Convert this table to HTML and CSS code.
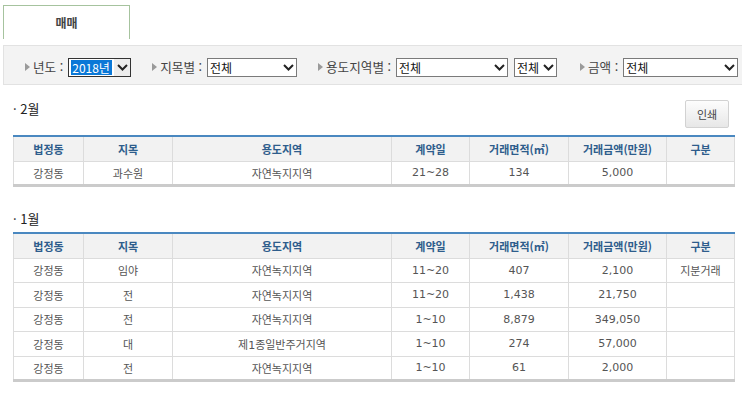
FILE: index.html
```html
<!DOCTYPE html>
<html lang="ko">
<head>
<meta charset="utf-8">
<link rel="stylesheet" href="styles.css">
</head>
<body>
<div class="tabs"><div class="tab">매매</div></div>

<div class="filter">
  <div class="fitem">
    <svg class="tri" width="5" height="8" viewBox="0 0 5 8"><path d="M0 0 L5 4 L0 8 Z" fill="#9a9a9a"/></svg>
    <span class="flabel">년도 :</span>
    <span class="sel focus w62"><span class="hl">2018년</span><span class="chev"><svg width="11" height="7" viewBox="0 0 11 7"><path d="M1 1 L5.5 5.5 L10 1" fill="none" stroke="#222" stroke-width="2"/></svg></span></span>
  </div>
  <div class="fitem">
    <svg class="tri" width="5" height="8" viewBox="0 0 5 8"><path d="M0 0 L5 4 L0 8 Z" fill="#9a9a9a"/></svg>
    <span class="flabel">지목별 :</span>
    <span class="sel w90"><span class="stext">전체</span><span class="chev"><svg width="11" height="7" viewBox="0 0 11 7"><path d="M1 1 L5.5 5.5 L10 1" fill="none" stroke="#222" stroke-width="2"/></svg></span></span>
  </div>
  <div class="fitem">
    <svg class="tri" width="5" height="8" viewBox="0 0 5 8"><path d="M0 0 L5 4 L0 8 Z" fill="#9a9a9a"/></svg>
    <span class="flabel">용도지역별 :</span>
    <span class="sel w111"><span class="stext">전체</span><span class="chev"><svg width="11" height="7" viewBox="0 0 11 7"><path d="M1 1 L5.5 5.5 L10 1" fill="none" stroke="#222" stroke-width="2"/></svg></span></span>
    <span class="sel w42"><span class="stext">전체</span><span class="chev"><svg width="11" height="7" viewBox="0 0 11 7"><path d="M1 1 L5.5 5.5 L10 1" fill="none" stroke="#222" stroke-width="2"/></svg></span></span>
  </div>
  <div class="fitem">
    <svg class="tri" width="5" height="8" viewBox="0 0 5 8"><path d="M0 0 L5 4 L0 8 Z" fill="#9a9a9a"/></svg>
    <span class="flabel">금액 :</span>
    <span class="sel w113"><span class="stext">전체</span><span class="chev"><svg width="11" height="7" viewBox="0 0 11 7"><path d="M1 1 L5.5 5.5 L10 1" fill="none" stroke="#222" stroke-width="2"/></svg></span></span>
  </div>
</div>

<div class="content">
  <div class="shead first">
    <div class="stitle">· 2월</div>
    <button class="print">인쇄</button>
  </div>
  <table class="grid">
    <colgroup><col class="c1"><col class="c2"><col class="c3"><col class="c4"><col class="c5"><col class="c6"><col class="c7"></colgroup>
    <thead><tr><th>법정동</th><th>지목</th><th>용도지역</th><th>계약일</th><th>거래면적(㎡)</th><th>거래금액(만원)</th><th>구분</th></tr></thead>
    <tbody>
      <tr><td>강정동</td><td>과수원</td><td>자연녹지지역</td><td>21~28</td><td>134</td><td>5,000</td><td></td></tr>
    </tbody>
  </table>

  <div class="shead second">
    <div class="stitle">· 1월</div>
  </div>
  <table class="grid">
    <colgroup><col class="c1"><col class="c2"><col class="c3"><col class="c4"><col class="c5"><col class="c6"><col class="c7"></colgroup>
    <thead><tr><th>법정동</th><th>지목</th><th>용도지역</th><th>계약일</th><th>거래면적(㎡)</th><th>거래금액(만원)</th><th>구분</th></tr></thead>
    <tbody>
      <tr><td>강정동</td><td>임야</td><td>자연녹지지역</td><td>11~20</td><td>407</td><td>2,100</td><td>지분거래</td></tr>
      <tr><td>강정동</td><td>전</td><td>자연녹지지역</td><td>11~20</td><td>1,438</td><td>21,750</td><td></td></tr>
      <tr><td>강정동</td><td>전</td><td>자연녹지지역</td><td>1~10</td><td>8,879</td><td>349,050</td><td></td></tr>
      <tr><td>강정동</td><td>대</td><td>제1종일반주거지역</td><td>1~10</td><td>274</td><td>57,000</td><td></td></tr>
      <tr><td>강정동</td><td>전</td><td>자연녹지지역</td><td>1~10</td><td>61</td><td>2,000</td><td></td></tr>
    </tbody>
  </table>
</div>
</body>
</html>
```

FILE: styles.css
```css
* { box-sizing: border-box; }
html, body { margin: 0; padding: 0; background: #fff; }
body {
  font-family: "Noto Sans CJK KR", "Noto Sans", sans-serif;
  color: #333;
  width: 742px;
  overflow: hidden;
}
.tabs { padding: 5px 0 0 3px; height: 39px; }
.tab {
  width: 127px;
  height: 34px;
  border: 1px solid #a6c39e;
  border-bottom: none;
  text-align: center;
  font-size: 12px;
  font-weight: bold;
  color: #444;
  line-height: 34px;
}
.filter {
  margin: 6px 0 0 3px;
  height: 40px;
  background: #f3f3f3;
  border: 1px solid #e2e2e2;
  border-right: none;
  display: flex;
  align-items: center;
  padding: 4px 0 0 21px;
  font-size: 12px;
  color: #444;
}
.fitem { display: flex; align-items: center; margin-right: 21px; }
.fitem:last-child { margin-right: 0; }
.tri { margin-right: 3px; }
.flabel { margin-right: 5px; line-height: 16px; white-space: nowrap; font-size: 12.6px; }
.sel {
  height: 19px;
  border: 1px solid #7a7a7a;
  background: #fff;
  display: flex;
  align-items: center;
  justify-content: space-between;
  color: #111;
  font-size: 12px;
  padding-left: 2px;
  white-space: nowrap;
  flex: none;
}
.sel + .sel { margin-left: 6px; }
.sel.focus { border-color: #333; }
.w62 { width: 63px; }
.w90 { width: 90px; }
.w111 { width: 112px; }
.w42 { width: 43px; }
.w113 { width: 115px; }
.fitem:last-child { margin-left: 2px; }
.hl { background: #0a78d7; color: #fff; line-height: 15px; padding: 0 2px 0 1px; }
.stext { line-height: 15px; }
.chev { display: flex; align-items: center; justify-content: center; width: 16px; height: 100%; flex: none; }
.focus .chev { background: #ececec; }
.content { padding: 0 8px 0 13px; }
.shead { display: flex; justify-content: space-between; align-items: flex-start; }
.shead.first { margin-top: 15px; height: 35px; }
.shead.second { margin-top: 23px; height: 22px; }
.stitle {
  font-size: 13px;
  font-weight: normal;
  line-height: 16px;
  color: #222;
  padding-top: 1px;
}
.print {
  margin-top: 0;
  margin-right: 5px;
  width: 44px;
  height: 28px;
  border: 1px solid #d2d2d2;
  border-radius: 2px;
  background: linear-gradient(#fdfdfd, #e7e7e7);
  font-family: inherit;
  font-size: 11px;
  color: #444;
  padding: 0;
}
.grid {
  width: 721px;
  border-collapse: collapse;
  table-layout: fixed;
  border-top: 2px solid #4a88c0;
  border-bottom: 3px solid #cbcbcb;
  font-family: "DejaVu Sans", "Noto Sans CJK KR", sans-serif;
  font-size: 11px;
}
.c1 { width: 70px; }
.c2 { width: 89px; }
.c3 { width: 219px; }
.c4 { width: 78px; }
.c5 { width: 99px; }
.c6 { width: 98px; }
.c7 { width: 68px; }
.grid th, .grid td {
  border: 1px solid #dcdcdc;
  text-align: center;
  padding: 0;
  white-space: nowrap;
}
.grid th {
  height: 25px;
  background: #f2f2f2;
  color: #2e5d8c;
  font-weight: bold;
  font-family: "Noto Sans CJK KR", sans-serif;
}
.grid td {
  height: 24.5px;
  color: #555;
}
.grid tbody tr:last-child td { border-bottom: none; }
```
